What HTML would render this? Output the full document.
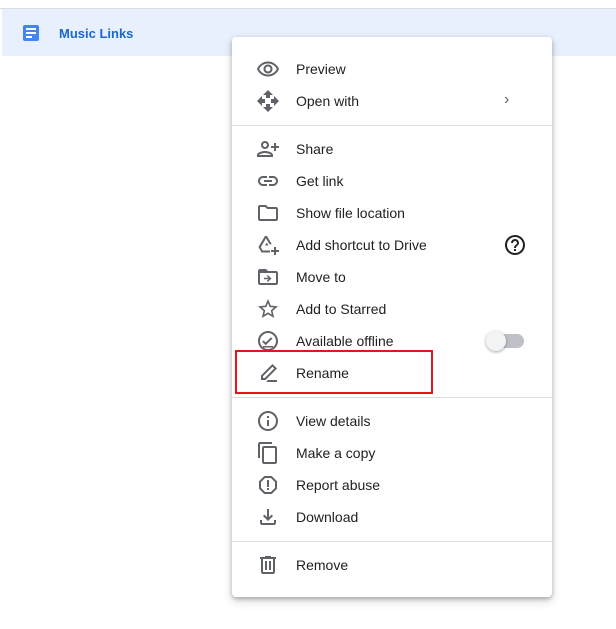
<!DOCTYPE html>
<html><head><meta charset="utf-8"><style>
*{margin:0;padding:0;box-sizing:border-box}
body{width:616px;height:629px;background:#fff;position:relative;overflow:hidden;font-family:"Liberation Sans",Roboto,Arial,sans-serif}
.top{position:absolute;left:0;top:8px;width:616px;height:1px;background:#dadce0}
.band{position:absolute;left:2px;top:9px;width:614px;height:47px;background:#e8f0fe}
.doc{position:absolute;left:23px;top:25px;width:16px;height:16px;background:#4285f4;border-radius:2px}
.doc i{position:absolute;left:3px;height:2px;background:#fff}
.title{position:absolute;left:59px;top:26px;font-size:13px;font-weight:bold;color:#1967d2}
.menu{position:absolute;left:232px;top:37px;width:320px;height:560px;background:#fff;border-radius:4px;box-shadow:0 2px 4px rgba(0,0,0,.25),0 4px 10px rgba(0,0,0,.15)}
.it{position:absolute;left:0;width:320px;height:32px}
.it svg{position:absolute;left:24px;top:4px;width:24px;height:24px;fill:#5f6368}
.it span{position:absolute;left:64px;top:8px;font-size:14px;color:#202124;line-height:16px}
.div{position:absolute;left:0;width:320px;height:1px;background:#dadce0}
.red{position:absolute;left:235px;top:350px;width:198px;height:44px;border:2px solid #e8141b}
</style></head><body>
<div class="top"></div>
<div class="band"></div>
<div class="doc"><i style="top:3px;width:10px"></i><i style="top:7px;width:10px"></i><i style="top:11px;width:6px"></i></div>
<div class="title">Music Links</div>
<div class="menu">
<div class="it" style="top:16px"><svg viewBox="0 0 24 24"><path d="M12 6.5c3.8 0 7.2 2.1 8.8 5.5-1.6 3.4-5 5.5-8.8 5.5S4.8 15.4 3.2 12C4.8 8.6 8.2 6.5 12 6.5m0-2C7 4.5 2.7 7.6 1 12c1.7 4.4 6 7.5 11 7.5s9.3-3.1 11-7.5c-1.7-4.4-6-7.5-11-7.5zm0 5a2.5 2.5 0 1 1 0 5 2.5 2.5 0 0 1 0-5m0-2c-2.5 0-4.5 2-4.5 4.5s2 4.5 4.5 4.5 4.5-2 4.5-4.5-2-4.5-4.5-4.5z"/></svg><span>Preview</span></div>
<div class="it" style="top:48px"><svg viewBox="0 0 24 24"><path d="M10 9h4V6h3l-5-5-5 5h3v3zm-1 1H6V7l-5 5 5 5v-3h3v-4zm14 2l-5-5v3h-3v4h3v3l5-5zm-9 3h-4v3H7l5 5 5-5h-3v-3z"/></svg><span>Open with</span><span style="left:272px;top:7px;color:#5f6368;font-size:16px">›</span></div>
<div class="div" style="top:88px"></div>
<div class="it" style="top:96px"><svg viewBox="0 0 24 24"><path d="M9 12c2.2 0 4-1.8 4-4s-1.8-4-4-4-4 1.8-4 4 1.8 4 4 4zm0-6c1.1 0 2 .9 2 2s-.9 2-2 2-2-.9-2-2 .9-2 2-2zm0 8c-2.7 0-8 1.3-8 4v2h16v-2c0-2.7-5.3-4-8-4zm-6 4c.2-.7 3.3-2 6-2s5.8 1.3 6 2H3zM20 9V6h-2v3h-3v2h3v3h2v-3h3V9h-3z"/></svg><span>Share</span></div>
<div class="it" style="top:128px"><svg viewBox="0 0 24 24"><path d="M17 7h-4v2h4c1.65 0 3 1.35 3 3s-1.35 3-3 3h-4v2h4c2.76 0 5-2.24 5-5s-2.24-5-5-5zm-6 8H7c-1.65 0-3-1.35-3-3s1.35-3 3-3h4V7H7c-2.76 0-5 2.24-5 5s2.24 5 5 5h4v-2zm-3-4h8v2H8z"/></svg><span>Get link</span></div>
<div class="it" style="top:160px"><svg viewBox="0 0 24 24"><path d="M20 6h-8l-2-2H4c-1.1 0-2 .9-2 2v12c0 1.1.9 2 2 2h16c1.1 0 2-.9 2-2V8c0-1.1-.9-2-2-2zm0 12H4V6h5.17l2 2H20v10z"/></svg><span>Show file location</span></div>
<div class="it" style="top:192px"><svg viewBox="0 0 24 24"><path d="M9 3L2.5 14l3 5.5H14v-2H6.6l-1.8-3.3L10 5.2l3.5 6h2.3L11 3H9zm0 9.5l1.7-3 1.7 3H9zM18 14v3h-3v2h3v3h2v-3h3v-2h-3v-3h-2z"/></svg><span>Add shortcut to Drive</span><svg viewBox="0 0 24 24" style="left:271px"><path d="M11 18h2v-2h-2v2zm1-16C6.48 2 2 6.48 2 12s4.48 10 10 10 10-4.48 10-10S17.52 2 12 2zm0 18c-4.41 0-8-3.59-8-8s3.59-8 8-8 8 3.59 8 8-3.59 8-8 8zm0-14c-2.21 0-4 1.79-4 4h2c0-1.1.9-2 2-2s2 .9 2 2c0 2-3 1.75-3 5h2c0-2.25 3-2.5 3-5 0-2.21-1.79-4-4-4z" fill="#202124"/></svg></div>
<div class="it" style="top:224px"><svg viewBox="0 0 24 24"><path d="M20 6h-8l-2-2H4c-1.1 0-2 .9-2 2v12c0 1.1.9 2 2 2h16c1.1 0 2-.9 2-2V8c0-1.1-.9-2-2-2zm0 12H4V8h16v10zm-8.2-1l3.7-3.5-3.7-3.5-1 1 1.8 1.8H8v1.4h4.6l-1.8 1.8 1 1z"/></svg><span>Move to</span></div>
<div class="it" style="top:256px"><svg viewBox="0 0 24 24"><path d="M22 9.24l-7.19-.62L12 2 9.19 8.63 2 9.24l5.46 4.73L5.82 21 12 17.27 18.18 21l-1.63-7.03L22 9.24zM12 15.4l-3.76 2.27 1-4.28-3.32-2.88 4.38-.38L12 6.1l1.71 4.04 4.38.38-3.32 2.88 1 4.28L12 15.4z"/></svg><span>Add to Starred</span></div>
<div class="it" style="top:288px"><svg viewBox="0 0 24 24"><path d="M12 2C6.5 2 2 6.5 2 12s4.5 10 10 10 10-4.5 10-10S17.5 2 12 2zm0 18c-4.4 0-8-3.6-8-8s3.6-8 8-8 8 3.6 8 8-3.6 8-8 8zm-2.3-6.5L7.6 11.4 6.2 12.8l3.5 3.5 6.7-6.7-1.4-1.4zM7 17h10v1.5H7z"/></svg><span>Available offline</span>
<div style="position:absolute;left:258px;top:9px;width:34px;height:14px;border-radius:7px;background:#bdc1c6"></div>
<div style="position:absolute;left:254px;top:6px;width:20px;height:20px;border-radius:50%;background:#f1f3f4;box-shadow:0 1px 3px rgba(0,0,0,.35)"></div></div>
<div class="it" style="top:320px"><svg viewBox="0 0 24 24"><path d="M16.5 3l4.5 4.5L9.5 19H5v-4.5L16.5 3zm0 2.8L7 15.3V17h1.7l9.5-9.5-1.7-1.7zM12 19h9v2h-11z"/></svg><span>Rename</span></div>
<div class="div" style="top:360px"></div>
<div class="it" style="top:368px"><svg viewBox="0 0 24 24"><path d="M11 7h2v2h-2zm0 4h2v6h-2zm1-9C6.48 2 2 6.48 2 12s4.48 10 10 10 10-4.48 10-10S17.52 2 12 2zm0 18c-4.41 0-8-3.59-8-8s3.59-8 8-8 8 3.59 8 8-3.59 8-8 8z"/></svg><span>View details</span></div>
<div class="it" style="top:400px"><svg viewBox="0 0 24 24"><path d="M16 1H4c-1.1 0-2 .9-2 2v14h2V3h12V1zm3 4H8c-1.1 0-2 .9-2 2v14c0 1.1.9 2 2 2h11c1.1 0 2-.9 2-2V7c0-1.1-.9-2-2-2zm0 16H8V7h11v14z"/></svg><span>Make a copy</span></div>
<div class="it" style="top:432px"><svg viewBox="0 0 24 24"><path d="M15.73 3H8.27L3 8.27v7.46L8.27 21h7.46L21 15.73V8.27L15.73 3zM19 14.9L14.9 19H9.1L5 14.9V9.1L9.1 5h5.8L19 9.1v5.8zM11 7h2v7h-2zm0 8h2v2h-2z"/></svg><span>Report abuse</span></div>
<div class="it" style="top:464px"><svg viewBox="0 0 24 24"><path d="M18 15v3H6v-3H4v3c0 1.1.9 2 2 2h12c1.1 0 2-.9 2-2v-3h-2zm-1-4l-1.41-1.41L13 12.17V4h-2v8.17L8.41 9.59 7 11l5 5 5-5z"/></svg><span>Download</span></div>
<div class="div" style="top:504px"></div>
<div class="it" style="top:512px"><svg viewBox="0 0 24 24"><path d="M15 4V3H9v1H4v2h1v13c0 1.1.9 2 2 2h10c1.1 0 2-.9 2-2V6h1V4h-5zm2 15H7V6h10v13zM9 8h2v9H9zm4 0h2v9h-2z"/></svg><span>Remove</span></div>
</div>
<div class="red"></div>
</body></html>
